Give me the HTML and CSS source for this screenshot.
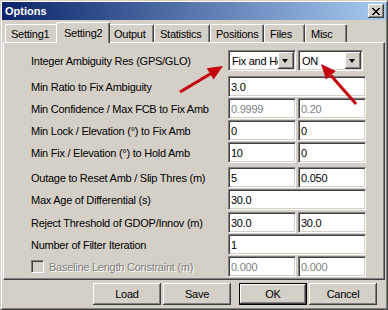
FILE: index.html
```html
<!DOCTYPE html>
<html lang="en">
<head>
    <meta charset="UTF-8">
    <title>Options</title>
    <link rel="stylesheet" href="styles.css">
</head>
<body>
    <div class="window">
        <div class="titlebar">
            <span class="title">Options</span>
            <button class="close">
                <svg width="8" height="7" viewBox="0 0 8 7"><path d="M0 0L7 7M1 0L8 7M7 0L0 7M8 0L1 7" stroke="#000" stroke-width="1"/></svg>
            </button>
        </div>

        <div class="body">
            <div class="tabs">
                <div class="tab">Setting1</div>
                <div class="tab active">Setting2</div>
                <div class="tab">Output</div>
                <div class="tab">Statistics</div>
                <div class="tab">Positions</div>
                <div class="tab">Files</div>
                <div class="tab">Misc</div>
            </div>

            <div class="panel">
                <div class="row">
                    <span class="label">Integer Ambiguity Res (GPS/GLO)</span>
                    <div class="fields">
                        <div class="combo combo-mode"><span class="combo-text">Fix and Hold</span><span class="drop"></span></div>
                        <div class="combo combo-glo"><span class="combo-text">ON</span><span class="drop"></span></div>
                    </div>
                </div>
                <div class="row row-sep">
                    <span class="label">Min Ratio to Fix Ambiguity</span>
                    <div class="fields"><div class="field">3.0</div></div>
                </div>
                <div class="row">
                    <span class="label">Min Confidence / Max FCB to Fix Amb</span>
                    <div class="fields"><div class="field disabled">0.9999</div><div class="field disabled">0.20</div></div>
                </div>
                <div class="row">
                    <span class="label">Min Lock / Elevation (°) to Fix Amb</span>
                    <div class="fields"><div class="field">0</div><div class="field">0</div></div>
                </div>
                <div class="row">
                    <span class="label">Min Fix / Elevation (°) to Hold Amb</span>
                    <div class="fields"><div class="field">10</div><div class="field">0</div></div>
                </div>
                <div class="row row-sep2">
                    <span class="label">Outage to Reset Amb / Slip Thres (m)</span>
                    <div class="fields"><div class="field">5</div><div class="field">0.050</div></div>
                </div>
                <div class="row">
                    <span class="label">Max Age of Differential (s)</span>
                    <div class="fields"><div class="field">30.0</div></div>
                </div>
                <div class="row row-sep3">
                    <span class="label">Reject Threshold of GDOP/Innov (m)</span>
                    <div class="fields"><div class="field">30.0</div><div class="field">30.0</div></div>
                </div>
                <div class="row">
                    <span class="label">Number of Filter Iteration</span>
                    <div class="fields"><div class="field">1</div></div>
                </div>
                <div class="row">
                    <span class="label label-check"><span class="checkbox"></span><span class="disabled-text">Baseline Length Constraint (m)</span></span>
                    <div class="fields"><div class="field disabled">0.000</div><div class="field disabled">0.000</div></div>
                </div>
            </div>

            <div class="buttons">
                <button class="btn">Load</button>
                <button class="btn">Save</button>
                <button class="btn btn-ok">OK</button>
                <button class="btn">Cancel</button>
            </div>
        </div>

        <!-- red callout arrows -->
        <svg class="arrows" width="388" height="310" viewBox="0 0 388 310">
            <line x1="179" y1="91" x2="210" y2="72.5" stroke="#c4000f" stroke-width="3"/>
            <polygon points="222,65 212.6,78.4 205.8,67.2" fill="#c4000f"/>
            <line x1="355" y1="103" x2="330" y2="74.5" stroke="#c4000f" stroke-width="3"/>
            <polygon points="320,63 334.8,70 325,78.6" fill="#c4000f"/>
        </svg>
    </div>
</body>
</html>
```

FILE: styles.css
```css
* {
    box-sizing: border-box;
}
body {
    margin: 0;
    font: 11px "Liberation Sans", Arial, sans-serif;
    letter-spacing: -0.25px;
    color: #000;
}
.window {
    position: relative;
    width: 388px;
    height: 310px;
    padding: 1px;
    display: flex;
    flex-direction: column;
    background: #d4d0c8;
    border: 1px solid;
    border-color: #d4d0c8 #404040 #404040 #d4d0c8;
    box-shadow: inset 1px 1px #fff, inset -1px -1px #808080;
}

/* Title bar */
.titlebar {
    height: 18px;
    display: flex;
    align-items: center;
    justify-content: space-between;
    padding: 0 2px 0 3px;
    background: linear-gradient(to right, #0a246a, #a6caf0);
}
.title {
    color: #fff;
    font-weight: bold;
    letter-spacing: 0;
}
.close {
    width: 16px;
    height: 14px;
    padding: 0;
    border: 0;
    display: flex;
    align-items: center;
    justify-content: center;
    background: #d4d0c8;
    box-shadow: inset -1px -1px #404040, inset 1px 1px #fff, inset -2px -2px #808080;
}

.body {
    flex: 1;
    display: flex;
    flex-direction: column;
    padding: 2px 1px 0 1px;
}

/* Tabs */
.tabs {
    display: flex;
    align-items: flex-start;
    height: 20px;
    padding-left: 2px;
}
.tab {
    position: relative;
    height: 18px;
    margin-top: 2px;
    padding-left: 5px;
    display: flex;
    align-items: center;
    white-space: nowrap;
    background: #d4d0c8;
    border-top: 1px solid #fff;
    border-left: 1px solid #fff;
    border-right: 1px solid #404040;
    border-radius: 2px 2px 0 0;
    box-shadow: inset -1px 0 #808080;
}
.tab:nth-child(1) { width: 53px; }
.tab:nth-child(2) { width: 50px; }
.tab:nth-child(3) { width: 46px; }
.tab:nth-child(4) { width: 56px; }
.tab:nth-child(5) { width: 54px; }
.tab:nth-child(6) { width: 41px; }
.tab:nth-child(7) { width: 42px; }
.tab.active {
    z-index: 1;
    height: 21px;
    margin: 0 -2px;
    padding-left: 7px;
    padding-bottom: 1px;
    width: 54px;
}

/* Tab page */
.panel {
    height: 238px;
    padding: 7px 0 0 27px;
    display: flex;
    flex-direction: column;
    border: 1px solid;
    border-color: #fff #404040 #404040 #fff;
    box-shadow: inset -1px -1px #808080;
}
.row {
    height: 21px;
    margin-top: 1px;
    display: flex;
    align-items: center;
}
.row:first-child { margin-top: 0; }
.row-sep { margin-top: 5px; }
.row-sep2 { margin-top: 4px; }
.row-sep3 { margin-top: 2px; }
.label {
    width: 197px;
    white-space: nowrap;
    overflow: hidden;
}
.label-check {
    display: flex;
    align-items: center;
}
.checkbox {
    width: 13px;
    height: 13px;
    margin-right: 5px;
    background: #d4d0c8;
    border: 1px solid;
    border-color: #808080 #fff #fff #808080;
    box-shadow: inset 1px 1px #404040, inset -1px -1px #d4d0c8;
}
.disabled-text {
    color: #808080;
    text-shadow: 1px 1px #fff;
}
.fields {
    width: 138px;
    display: flex;
    gap: 2px;
}
.field,
.combo {
    height: 21px;
    background: #fff;
    border: 1px solid;
    border-color: #808080 #fff #fff #808080;
    box-shadow: inset 1px 1px #404040, inset -1px -1px #d4d0c8;
    display: flex;
    align-items: center;
}
.field {
    flex: 1;
    padding: 0 2px;
}
.field.disabled {
    color: #808080;
}
.combo {
    padding: 1px;
}
.combo-mode { width: 68px; }
.combo-glo { width: 65px; }
.combo-text {
    flex: 1;
    padding-left: 2px;
    white-space: nowrap;
    overflow: hidden;
}
.drop {
    position: relative;
    width: 16px;
    height: 17px;
    flex: none;
    background: #d4d0c8;
    box-shadow: inset -1px -1px #404040, inset 1px 1px #fff, inset -2px -2px #808080;
}
.drop::after {
    content: "";
    position: absolute;
    left: 4px;
    top: 7px;
    border-left: 3.5px solid transparent;
    border-right: 3.5px solid transparent;
    border-top: 4px solid #000;
}

/* Dialog buttons */
.buttons {
    display: flex;
    justify-content: flex-end;
    gap: 2px;
    padding: 3px 8px 0 0;
}
.btn {
    width: 68px;
    height: 22px;
    padding: 0;
    border: 0;
    font: inherit;
    letter-spacing: inherit;
    color: #000;
    background: #d4d0c8;
    box-shadow: inset -1px -1px #404040, inset 1px 1px #fff, inset -2px -2px #808080;
}
.btn-ok {
    margin-left: 6px;
    box-shadow: inset 0 0 0 1px #000, inset -2px -2px #404040, inset 2px 2px #fff, inset -3px -3px #808080;
}

.arrows {
    position: absolute;
    left: 0;
    top: 0;
    pointer-events: none;
}
```
